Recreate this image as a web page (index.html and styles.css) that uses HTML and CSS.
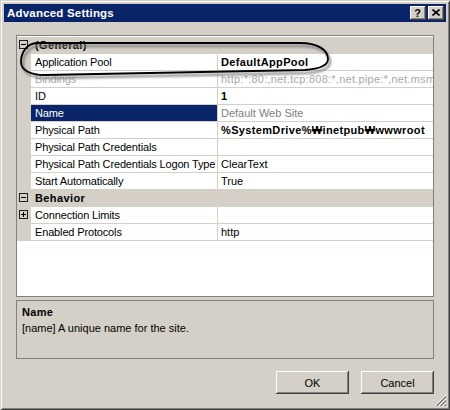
FILE: index.html
```html
<!DOCTYPE html>
<html>
<head>
<meta charset="utf-8">
<link rel="stylesheet" href="styles.css">
</head>
<body>
<div class="window">
  <div class="titlebar">
    <span class="title">Advanced Settings</span>
    <div class="tbtns">
      <span class="tbtn help">?</span>
      <span class="tbtn close"><svg width="8" height="7" viewBox="0 0 8 7"><path d="M0.5 0.5 L7.5 6.5 M7.5 0.5 L0.5 6.5" stroke="#000" stroke-width="1.6"/></svg></span>
    </div>
  </div>
  <div class="body">
    <div class="grid">
      <div class="row cat"><span class="margin"><i class="exp"></i></span><span class="catname">(General)</span></div>
      <div class="row"><span class="margin"></span><span class="name">Application Pool</span><span class="val bold">DefaultAppPool</span></div>
      <div class="row"><span class="margin"></span><span class="name dim">Bindings</span><span class="val dim wide">http:*:80:,net.tcp:808:*,net.pipe:*,net.msmq:localhost,msmq.formatname:localhost</span></div>
      <div class="row"><span class="margin"></span><span class="name">ID</span><span class="val bold">1</span></div>
      <div class="row"><span class="margin"></span><span class="name sel">Name</span><span class="val grey">Default Web Site</span></div>
      <div class="row"><span class="margin"></span><span class="name">Physical Path</span><span class="val bold">%SystemDrive%₩inetpub₩wwwroot</span></div>
      <div class="row"><span class="margin"></span><span class="name">Physical Path Credentials</span><span class="val"></span></div>
      <div class="row"><span class="margin"></span><span class="name">Physical Path Credentials Logon Type</span><span class="val">ClearText</span></div>
      <div class="row"><span class="margin"></span><span class="name">Start Automatically</span><span class="val">True</span></div>
      <div class="row cat"><span class="margin"><i class="exp"></i></span><span class="catname">Behavior</span></div>
      <div class="row"><span class="margin"><i class="exp plus"></i></span><span class="name">Connection Limits</span><span class="val"></span></div>
      <div class="row"><span class="margin"></span><span class="name">Enabled Protocols</span><span class="val">http</span></div>
    </div>
    <div class="desc">
      <div class="desc-title">Name</div>
      <div class="desc-text">[name] A unique name for the site.</div>
    </div>
    <div class="buttons">
      <span class="btn">OK</span>
      <span class="btn">Cancel</span>
    </div>
  </div>
  <svg class="annot" width="450" height="410" viewBox="0 0 450 410">
    <defs>
      <filter id="blur" x="-10%" y="-50%" width="120%" height="200%"><feGaussianBlur stdDeviation="1.3"/></filter>
    </defs>
    <path d="M36,43 L300,43 C318,43 328,50 328,59 C328,66 318,69 305,70 L45,75 C30,75 21,70 21,62 C21,52 27,44 36,43 Z" transform="translate(2,3)" fill="none" stroke="#7a7a7a" stroke-width="2.5" filter="url(#blur)" opacity="0.8"/>
    <path d="M36,43 L300,43 C318,43 328,50 328,59 C328,66 318,69 305,70 L45,75 C30,75 21,70 21,62 C21,52 27,44 36,43 Z" fill="none" stroke="#000" stroke-width="1.8"/>
  </svg>
  <svg class="grip" width="12" height="12" viewBox="0 0 12 12">
    <path d="M11 1 L1 11 M11 5 L5 11 M11 9 L9 11" stroke="#808080" stroke-width="1"/>
    <path d="M11 2 L2 11 M11 6 L6 11 M11 10 L10 11" stroke="#808080" stroke-width="1"/>
    <path d="M11 0 L0 11 M11 4 L4 11 M11 8 L8 11" stroke="#ffffff" stroke-width="1"/>
  </svg>
</div>
</body>
</html>
```
FILE: styles.css
```css
* { box-sizing: border-box; }
html, body { margin: 0; padding: 0; background: #d4d0c8; }
body {
  font-family: "Liberation Sans", Arial, sans-serif;
  font-size: 11px;
  color: #000;
}
.window {
  position: relative;
  width: 450px;
  height: 410px;
  padding: 4px;
  background: #d4d0c8;
  box-shadow: inset 1px 1px 0 #d4d0c8, inset -1px -1px 0 #404040, inset 2px 2px 0 #ffffff, inset -2px -2px 0 #808080;
  overflow: hidden;
}
.titlebar {
  height: 18px;
  background: #0a246a;
  display: flex;
  align-items: center;
  justify-content: space-between;
  padding: 0 2px 0 3px;
}
.title {
  color: #fff;
  font-weight: bold;
  font-size: 11.5px;
  letter-spacing: 0.2px;
}
.tbtns { display: flex; gap: 2px; }
.tbtn {
  width: 16px;
  height: 14px;
  background: #d4d0c8;
  box-shadow: inset -1px -1px 0 #404040, inset 1px 1px 0 #ffffff, inset -2px -2px 0 #808080, inset 2px 2px 0 #d4d0c8;
  display: flex;
  align-items: center;
  justify-content: center;
  font-weight: bold;
  font-size: 11px;
  line-height: 14px;
}
.tbtn.help { padding-right: 1px; padding-bottom: 1px; }
.tbtn.close svg { display: block; margin-top: -1px; }
.body { padding: 13px 12px 0 12px; }
.grid {
  height: 262px;
  border: 1px solid #808080;
  background: #fff;
  padding-top: 1px;
}
.row {
  display: grid;
  grid-template-columns: 14px 186px 1fr;
  height: 17px;
  border-bottom: 1px solid #d4d0c8;
  line-height: 16px;
  white-space: nowrap;
}
.margin { background: #d4d0c8; position: relative; }
.name { padding-left: 4px; overflow: hidden; letter-spacing: -0.15px; }
.val { border-left: 1px solid #d4d0c8; padding-left: 3px; overflow: hidden; }
.bold { font-weight: bold; letter-spacing: 0.35px; }
.wide { letter-spacing: 0.25px; }
.dim { color: #a8a8a8; }
.grey { color: #808080; }
.sel { background: #0a246a; color: #fff; }
.row.cat { background: #d4d0c8; }
.catname { grid-column: 2 / 4; font-weight: bold; padding-left: 4px; letter-spacing: 0.4px; }
.exp {
  position: absolute;
  left: 2px;
  top: 3px;
  width: 9px;
  height: 9px;
  border: 1px solid #202020;
}
.exp::before {
  content: "";
  position: absolute;
  left: 1px;
  top: 3px;
  width: 5px;
  height: 1px;
  background: #000;
}
.exp.plus::after {
  content: "";
  position: absolute;
  left: 3px;
  top: 1px;
  width: 1px;
  height: 5px;
  background: #000;
}
.desc {
  margin-top: 3px;
  height: 59px;
  border: 1px solid #808080;
  padding: 3px 5px;
  line-height: 16px;
}
.desc-title { font-weight: bold; letter-spacing: 0.3px; }
.buttons {
  margin-top: 12px;
  display: flex;
  justify-content: flex-end;
  gap: 12px;
}
.btn {
  width: 73px;
  height: 23px;
  display: flex;
  align-items: center;
  justify-content: center;
  box-shadow: inset -1px -1px 0 #404040, inset 1px 1px 0 #ffffff, inset -2px -2px 0 #808080, inset 2px 2px 0 #d4d0c8;
}
.annot { position: absolute; left: 0; top: 0; pointer-events: none; }
.grip { position: absolute; right: 3px; bottom: 3px; }
```
